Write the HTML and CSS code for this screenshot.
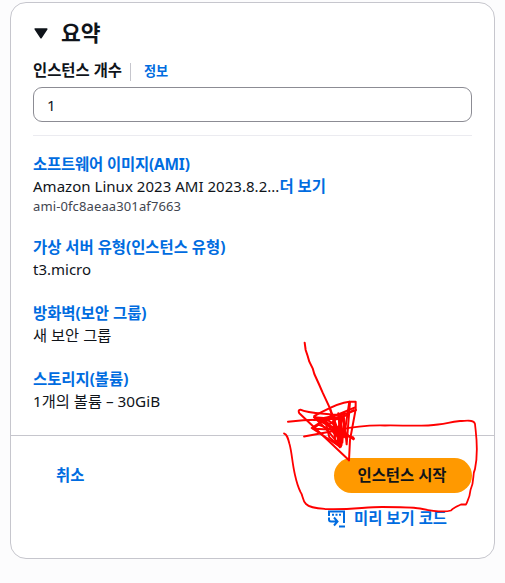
FILE: index.html
```
<!DOCTYPE html>
<html lang="ko">
<head>
  <meta charset="UTF-8" />
  <title>인스턴스 시작</title>
  <link rel="stylesheet" href="styles.css">
</head>
<body>
  <div class="card">
    <div class="summary">
      <h2 class="title">
        <svg class="caret" width="14" height="11" viewBox="0 0 14 11"><path d="M1.2 1H12.8L7 9.8z" /></svg>
        <span>요약</span>
      </h2>

      <div class="label-row">
        <label for="count">인스턴스 개수</label>
        <a class="info">정보</a>
      </div>
      <input class="count" type="text" id="count" value="1" />

      <div class="details">
        <div class="item">
          <a class="link ami">소프트웨어 이미지(AMI)</a>
          <div class="value"><span class="ami-name">Amazon Linux 2023 AMI 2023.8.2...</span><a class="link">더 보기</a></div>
          <div class="small">ami-0fc8aeaa301af7663</div>
        </div>
        <div class="item">
          <a class="link">가상 서버 유형(인스턴스 유형)</a>
          <div class="value">t3.micro</div>
        </div>
        <div class="item">
          <a class="link">방화벽(보안 그룹)</a>
          <div class="value korean">새 보안 그룹</div>
        </div>
        <div class="item">
          <a class="link">스토리지(볼륨)</a>
          <div class="value korean">1개의 볼륨 – 30GiB</div>
        </div>
      </div>
    </div>

    <div class="footer">
      <a class="link cancel">취소</a>
      <div class="actions">
        <button class="launch" type="button">인스턴스 시작</button>
        <a class="link preview">
          <svg class="code-icon" width="18" height="18" viewBox="0 0 18 18">
            <path d="M1 6V1.500H16V13" />
            <path d="M4 4.800H13.500" stroke-dasharray="2 1.500" />
            <path d="M1 7.500V9.500Q1 11.500 3 11.500H9M6 7.500L9.500 11.500L6 15.500M11 16.500H17" />
          </svg>
          <span>미리 보기 코드</span>
        </a>
      </div>
    </div>
  </div>

  <!-- hand-drawn marker over the launch button -->
  <svg class="marker" width="505" height="583" viewBox="0 0 505 583">
    <path d="M284 433.5C287 434 288 438 289.500 444C292 453 292 462 295 475C297 484 299 489 300.500 492C303 495 302 500 306 504C310 508 318 508.500 325 509C350 510 365 507 382 507C398 507 410 507 420 508.500C432 511 443 513 451 510.500C454 507 459 505.500 461 504.500H466C468 500 470 497 470.500 490C475 480 472 475 475 469C479 450 476 435 475 424C474 419 466 421 460 421C448 422 448 424 438 424.500C422 427 400 425 385 425.500C365 425 352 427 339 430L304 436.500" />
    <g transform="translate(270 330) scale(.3333)" stroke-width="6">
      <path d="M104 38L107 60 113 78 118 95 128 115 133 132 148 165 158 188 180 235 190 262 204 300 215 345" />
      <path d="M180 235C184 260 206 290 207 348L125 294 168 266 250 328" />
      <path d="M237 391L88 250Q83 240 91 239C112 250 152 250 190 254S240 246 258 240" />
      <path d="M237 391L240 330 257 238V215H238C200 218 165 242 133 258L150 276 255 232" />
      <path d="M54 275L100 271 175 268 230 256M132 262L210 268 250 240" />
      <path d="M240 216L230 343 222 264 217 338 205 250 213 350 175 304 135 264 180 282 224 248" />
      <path d="M132 270L180 260 150 274 210 300 130 296 145 284 190 302 252 326" />
      <path d="M133 262L165 276 190 262 196 336 210 352 186 254 160 278 205 305 222 256" />
      <path d="M238 215L222 322 209 270 203 344 178 322 166 274 198 318 214 264 210 334M180 298L250 322" />
    </g>
  </svg>
</body>
</html>
```

FILE: styles.css
```
* {
  box-sizing: border-box;
}
body {
  margin: 0;
  padding: 2px 10px 24px;
  background-color: #fcfcfd;
  font-family: "Noto Sans", "Noto Sans CJK KR", sans-serif;
  font-size: 15px;
  line-height: 23px;
  color: #0f141a;
}
.card {
  width: 485px;
  height: 557px;
  border: 1px solid #c6c6cd;
  border-radius: 16px;
  background-color: #fff;
}
.summary {
  height: 433px;
  padding: 15px 22px 0;
  border-bottom: 1px solid #c6c6cd;
}
.title {
  display: flex;
  align-items: center;
  gap: 13px;
  margin: 0;
  height: 30px;
  font-size: 21.5px;
  font-weight: 700;
  line-height: 30px;
}
.caret {
  margin-left: 1px;
  fill: #0f141a;
  stroke: #0f141a;
  stroke-width: 1.5;
  stroke-linejoin: round;
}
.label-row {
  display: flex;
  align-items: center;
  height: 23px;
  margin-top: 12px;
  font-size: 15.4px;
  font-weight: 700;
}
.label-row label {
  line-height: 22px;
  margin-top: -1px;
}
.info {
  height: 18px;
  margin-left: 8px;
  padding-left: 13px;
  border-left: 1px solid #c6c6cd;
  color: #006ce0;
  font-size: 13.2px;
  line-height: 17px;
}
.count {
  display: block;
  width: 439px;
  height: 35px;
  margin-top: 4px;
  padding: 0 13px;
  border: 1px solid #8c8c94;
  border-radius: 9px;
  color: #0f141a;
  font: inherit;
}
.details {
  display: flex;
  flex-direction: column;
  gap: 20px;
  margin-top: 13px;
  padding-top: 17px;
  border-top: 1px solid #ebebf0;
}
.link {
  color: #006ce0;
  font-weight: 700;
  font-size: 15.4px;
}
.item > .link {
  display: block;
}
.item > .ami {
  letter-spacing: -0.15px;
}
.ami-name {
  letter-spacing: 0.03px;
}
.item, .value {
  white-space: nowrap;
}
.value {
  height: 23px;
  line-height: 21px;
}
.korean {
  font-size: 15.3px;
}
.small {
  height: 17px;
  font-size: 13px;
  line-height: 15px;
  letter-spacing: 0.12px;
  color: #424650;
}
.footer {
  display: flex;
  justify-content: space-between;
  padding: 22px 22px 0 45px;
}
.cancel {
  line-height: 35px;
}
.actions {
  display: flex;
  flex-direction: column;
  align-items: flex-end;
}
.launch {
  width: 138px;
  height: 35px;
  padding: 0 2px 0 0;
  border: none;
  border-radius: 18px;
  background-color: #ff9900;
  color: #0f141a;
  font: inherit;
  font-size: 15.4px;
  font-weight: 700;
}
.preview {
  display: flex;
  align-items: center;
  gap: 8px;
  margin: 14px 25px 0 0;
}
.code-icon {
  fill: none;
  stroke: #006ce0;
  stroke-width: 2;
}
.marker {
  position: absolute;
  top: 0;
  left: 0;
  fill: none;
  stroke: #f00;
  stroke-width: 1.8;
  stroke-linecap: round;
  stroke-linejoin: round;
  pointer-events: none;
}
```
